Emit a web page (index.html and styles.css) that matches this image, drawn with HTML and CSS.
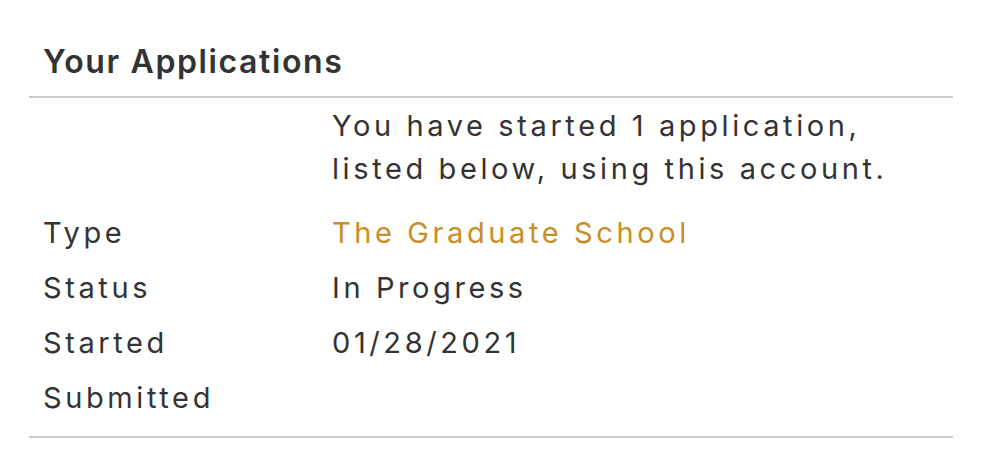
FILE: index.html
```html
<!DOCTYPE html>
<html lang="en">
<head>
  <meta charset="UTF-8">
  <meta name="viewport" content="width=device-width, initial-scale=1.0">
  <title>Your Applications</title>
  <link rel="stylesheet" href="styles.css">
</head>
<body>

  <div class="applications">
    <h2 class="applications-title">Your Applications</h2>

    <div class="applications-body">
      <div class="intro">
        <div></div>
        <p>You have started 1 application,<br>listed below, using this account.</p>
      </div>

      <dl class="app-details">
        <dt>Type</dt>
        <dd><a href="#">The Graduate School</a></dd>
        <dt>Status</dt>
        <dd>In Progress</dd>
        <dt>Started</dt>
        <dd>01/28/2021</dd>
        <dt>Submitted</dt>
        <dd></dd>
      </dl>
    </div>
  </div>

</body>
</html>
```

FILE: styles.css
```css
body {
  margin: 0;
  background-color: #fff;
  color: #333;
  font-family: Inter, "Open Sans", Arial, sans-serif;
}

.applications {
  width: 924px;
  margin-left: 29px;
  padding-top: 42px;
}

.applications-title {
  margin: 0;
  padding: 0 14px 14px;
  font-size: 32px;
  font-weight: 600;
  line-height: 40px;
  letter-spacing: 1.6px;
  border-bottom: 2px solid #ccc;
}

.applications-body {
  padding: 0 14px 11px;
  border-bottom: 2px solid #ccc;
  font-size: 29px;
  letter-spacing: 3.6px;
}

.intro {
  display: grid;
  grid-template-columns: 289px 1fr;
  padding-top: 6px;
  padding-bottom: 15px;
}

.intro p {
  margin: 0;
  line-height: 43px;
}

.app-details {
  display: grid;
  grid-template-columns: 289px 1fr;
  margin: 0;
  line-height: 55px;
}

.app-details dt,
.app-details dd {
  margin: 0;
  min-height: 55px;
}

.app-details a {
  color: #c98e25;
  text-decoration: none;
}
```
